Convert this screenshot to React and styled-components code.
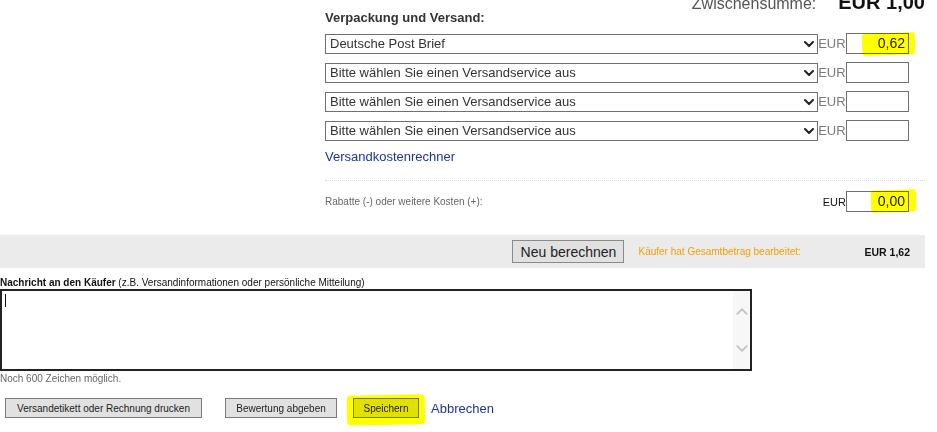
import React from "react";
import styled, { createGlobalStyle } from "styled-components";

const GlobalStyle = createGlobalStyle`
  html, body { margin: 0; padding: 0; background: #fff; }
  body {
    font-family: "Liberation Sans", Arial, sans-serif;
    color: #222;
    overflow: hidden;
  }
  * { box-sizing: border-box; }
`;

const Page = styled.div`
  width: 937px;
  height: 432px;
  overflow: hidden;
`;

const Shipping = styled.section`
  margin-left: 325px;
  width: 600px;
`;

const SubtotalRow = styled.div`
  display: flex;
  justify-content: flex-end;
  align-items: baseline;
  gap: 22px;
  height: 10px;
  margin-top: -9px;
  line-height: 22px;
  white-space: nowrap;
`;

const SubtotalLabel = styled.span`
  font-size: 16px;
  color: #555;
`;

const SubtotalValue = styled.span`
  font-size: 20px;
  font-weight: bold;
  color: #111;
`;

const Heading = styled.h3`
  margin: 0;
  padding-top: 9px;
  font-size: 13px;
  line-height: 15px;
  font-weight: bold;
  color: #333;
`;

const ServiceList = styled.div`
  display: flex;
  flex-direction: column;
  gap: 8px;
  margin-top: 8px;
  width: 584px;
`;

const ServiceRow = styled.div`
  display: flex;
  align-items: center;
  height: 21px;
`;

const SelectBox = styled.div`
  width: 494px;
  height: 20px;
  border: 1px solid #707070;
  background: #fff;
  font-size: 13px;
  line-height: 18px;
  color: #333;
  padding: 0 3px 0 4px;
  display: flex;
  align-items: center;
  justify-content: space-between;
`;

const EurLabel = styled.span`
  width: 28px;
  font-size: ${(p) => (p.$dark ? 11 : 13)}px;
  color: ${(p) => (p.$dark ? "#111" : "#7a7a7a")};
  text-align: ${(p) => (p.$dark ? "right" : "left")};
`;

const AmountBox = styled.div`
  position: relative;
  width: 63px;
  height: 21px;
  border: 1px solid #707070;
  background: #fff;
  font-size: 14px;
  line-height: 19px;
  text-align: right;
  padding-right: 3px;
  color: #222;
`;

const Marker = styled.span`
  position: absolute;
  pointer-events: none;
  background: #ffff00;
  mix-blend-mode: multiply;
  border-radius: ${(p) => p.$radius || "3px"};
  left: ${(p) => p.$left}px;
  top: ${(p) => p.$top}px;
  width: ${(p) => p.$w}px;
  height: ${(p) => p.$h}px;
  transform: rotate(${(p) => p.$rot || 0}deg);
`;

const CalcLink = styled.a`
  display: inline-block;
  margin-top: 8px;
  font-size: 13px;
  line-height: 15px;
  color: #19379a;
  text-decoration: none;
`;

const Divider = styled.div`
  margin-top: 15px;
  border-top: 1px dotted #d8d8d8;
  width: 600px;
`;

const DiscountRow = styled.div`
  display: flex;
  align-items: center;
  width: 584px;
  margin-top: 10px;
  height: 21px;
`;

const DiscountLabel = styled.span`
  flex: 1;
  font-size: 10px;
  color: #666;
`;

const TotalsBar = styled.div`
  margin-top: 23px;
  width: 925px;
  height: 33px;
  background: #ebebeb;
  display: flex;
  align-items: center;
  justify-content: flex-end;
  padding-right: 15px;
`;

const Button = styled.button`
  position: relative;
  font-family: "Liberation Sans", Arial, sans-serif;
  background: #e1e1e1;
  border: 1px solid ${(p) => p.$border || "#7a7a7a"};
  color: #222;
  padding: 0;
  cursor: pointer;
  font-size: ${(p) => p.$size || 10}px;
  width: ${(p) => p.$w}px;
  height: ${(p) => p.$h}px;
  margin-right: ${(p) => p.$mr || 0}px;
`;

const EditedNote = styled.span`
  width: 226px;
  font-size: 10px;
  color: #f5a000;
`;

const TotalValue = styled.span`
  font-size: 10.5px;
  font-weight: bold;
  color: #111;
`;

const Message = styled.section`
  margin-top: 10px;
`;

const MessageLabel = styled.div`
  font-size: 10px;
  line-height: 10px;
  color: #111;
  b { font-weight: bold; }
`;

const TextAreaFrame = styled.div`
  margin-top: 1px;
  width: 752px;
  height: 82px;
  border: 2px solid #222;
  display: flex;
`;

const TextArea = styled.div`
  flex: 1;
  padding: 3px 0 0 3px;
`;

const Caret = styled.span`
  display: block;
  width: 1px;
  height: 13px;
  background: #111;
`;

const ScrollTrack = styled.div`
  width: 17px;
  background: #f7f7f7;
  display: flex;
  flex-direction: column;
  align-items: center;
  justify-content: space-between;
  padding: 17px 0 17px;
`;

const Counter = styled.div`
  margin-top: 2px;
  font-size: 10px;
  color: #666;
`;

const ActionRow = styled.div`
  margin-top: 14px;
  padding-left: 5px;
  display: flex;
  align-items: center;
`;

const CancelLink = styled.a`
  font-size: 13px;
  color: #19379a;
  text-decoration: none;
`;

const Chevron = ({ up, color = "#222", w = 10, h = 6, sw = 2 }) => (
  <svg width={w} height={h} viewBox="0 0 10 6" fill="none">
    <polyline
      points={up ? "1,5 5,1 9,5" : "1,1 5,5 9,1"}
      stroke={color}
      strokeWidth={sw}
      strokeLinecap="round"
      strokeLinejoin="round"
    />
  </svg>
);

const services = [
  { label: "Deutsche Post Brief", amount: "0,62", marked: true },
  { label: "Bitte wählen Sie einen Versandservice aus", amount: "" },
  { label: "Bitte wählen Sie einen Versandservice aus", amount: "" },
  { label: "Bitte wählen Sie einen Versandservice aus", amount: "" },
];

export default function App() {
  return (
    <Page>
      <GlobalStyle />
      <Shipping>
        <SubtotalRow>
          <SubtotalLabel>Zwischensumme:</SubtotalLabel>
          <SubtotalValue>EUR 1,00</SubtotalValue>
        </SubtotalRow>
        <Heading>Verpackung und Versand:</Heading>
        <ServiceList>
          {services.map((s, i) => (
            <ServiceRow key={i}>
              <SelectBox>
                <span>{s.label}</span>
                <Chevron />
              </SelectBox>
              <EurLabel>EUR</EurLabel>
              <AmountBox>
                {s.marked && <Marker $left={15} $top={-1} $w={53} $h={22} $rot={-2} />}
                {s.amount}
              </AmountBox>
            </ServiceRow>
          ))}
        </ServiceList>
        <CalcLink href="#">Versandkostenrechner</CalcLink>
        <Divider />
        <DiscountRow>
          <DiscountLabel>Rabatte (-) oder weitere Kosten (+):</DiscountLabel>
          <EurLabel $dark>EUR</EurLabel>
          <AmountBox>
            <Marker $left={24} $top={-2} $w={45} $h={22} $rot={-2} />
            0,00
          </AmountBox>
        </DiscountRow>
      </Shipping>

      <TotalsBar>
        <Button $w={112} $h={23} $size={14} $mr={14} $border="#8a8a8a">
          Neu berechnen
        </Button>
        <EditedNote>Käufer hat Gesamtbetrag bearbeitet:</EditedNote>
        <TotalValue>EUR 1,62</TotalValue>
      </TotalsBar>

      <Message>
        <MessageLabel>
          <b>Nachricht an den Käufer</b> (z.B. Versandinformationen oder persönliche Mitteilung)
        </MessageLabel>
        <TextAreaFrame>
          <TextArea>
            <Caret />
          </TextArea>
          <ScrollTrack>
            <Chevron up color="#c4c4c4" w={12} h={7} sw={1.6} />
            <Chevron color="#c4c4c4" w={12} h={7} sw={1.6} />
          </ScrollTrack>
        </TextAreaFrame>
        <Counter>Noch 600 Zeichen möglich.</Counter>
      </Message>

      <ActionRow>
        <Button $w={197} $h={20} $mr={23}>Versandetikett oder Rechnung drucken</Button>
        <Button $w={112} $h={20} $mr={16}>Bewertung abgeben</Button>
        <Button $w={66} $h={20} $mr={12}>
          <Marker $left={-7} $top={-4} $w={78} $h={30} $rot={-1} $radius="4px" />
          Speichern
        </Button>
        <CancelLink href="#">Abbrechen</CancelLink>
      </ActionRow>
    </Page>
  );
}
